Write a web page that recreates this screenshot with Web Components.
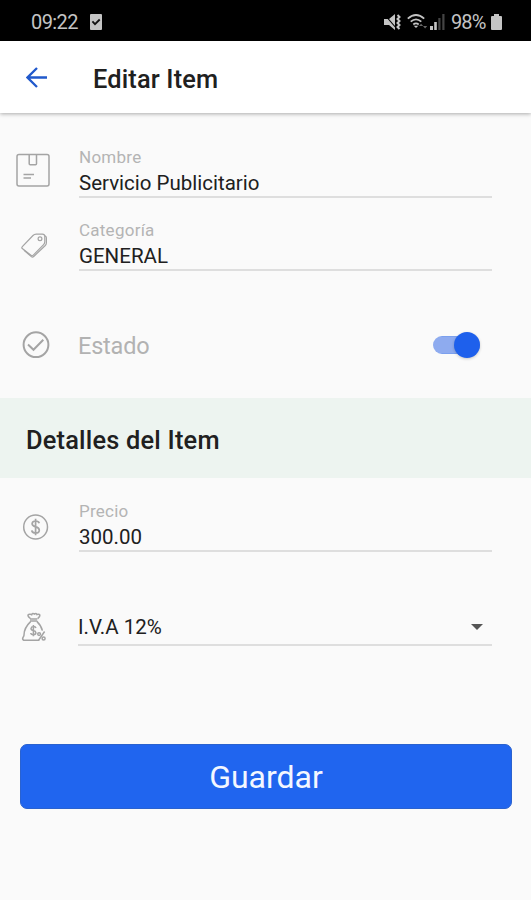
<!DOCTYPE html>
<html lang="es">
<head>
<meta charset="utf-8">
<title>Editar Item</title>
<style>
body { margin: 0; background: #fafafa; font-family: Roboto, "Liberation Sans", sans-serif; color: #202020; }
</style>
</head>
<body>
<edit-screen></edit-screen>
<script>
const define = (name, html) => {
  const template = document.createElement('template');
  template.innerHTML = html;
  customElements.define(name, class extends HTMLElement {
    constructor() {
      super();
      this.attachShadow({ mode: 'open' }).append(template.content.cloneNode(true));
    }
  });
};

define('status-bar', `
<style>
:host { display: flex; align-items: center; height: 41px; box-sizing: border-box; padding: 2px 29px 0 31px; background: #000; color: #c4c4c4; font-size: 20px; line-height: 24px; }
.time { width: 59px; letter-spacing: -.6px; }
.fill { flex: 1; }
.pct { width: 40px; letter-spacing: -.9px; }
svg { display: block; flex: none; }
.vol { margin-right: 6px; } .wifi { margin-right: 2px; } .sig { margin-right: 6px; }
</style>
<span class="time">09:22</span>
<svg width="12" height="16" viewBox="0 0 12 16"><rect width="12" height="16" rx="1" fill="#c4c4c4"/><path d="M2.4 7.4l2.6 2.8 4.7-4.7" fill="none" stroke="#111" stroke-width="1.8"/></svg>
<span class="fill"></span>
<svg class="vol" width="17" height="16" viewBox="0 0 17 16"><path d="M0 5h5l6-5v16L5 11H0z" fill="#c4c4c4"/><path d="M0 0l13 15" stroke="#000" stroke-width="1.1"/><path d="M13.5 1l2 2-2 2 2 2-2 2 2 2-2 2 2 2" fill="none" stroke="#c4c4c4" stroke-width="2"/></svg>
<svg class="wifi" width="21" height="16" viewBox="0 0 21 16"><g fill="none" stroke="#c4c4c4" stroke-width="1.8"><path d="M.8 4.6Q9 -2.7 17.2 4.6M3.7 7.7Q9 3 14.3 7.7M6.3 10.5Q9 8.3 11.7 10.5"/></g><path d="M6.7 11.7h4.6L9 14z" fill="#c4c4c4"/><path d="M12 12l2.1-2.3 2.1 2.3zm4 0l2.1 2.4 2.1-2.4z" fill="#666"/></svg>
<svg class="sig" width="15" height="16" viewBox="0 0 15 16"><path d="M0 12h3v4H0zM4.2 8h2.6v8H4.2z" fill="#c4c4c4"/><path d="M8.3 4h2.2v12H8.3zM12.3 0h2.2v16h-2.2z" fill="#444"/></svg>
<span class="pct">98%</span>
<svg width="11" height="16" viewBox="0 0 11 16"><path d="M3 0h5v2h2q1 0 1 1v12q0 1-1 1H1q-1 0-1-1V3q0-1 1-1h2z" fill="#c4c4c4"/></svg>
`);

define('app-bar', `
<style>
:host { display: flex; align-items: center; height: 72px; padding-left: 26px; background: #fff; box-shadow: 0 1px 4px rgba(0,0,0,.32); box-sizing: border-box; }
svg { display: block; margin-right: 46px; }
h1 { margin: 3px 0 0; font-size: 25.4px; font-weight: 500; line-height: 30px; letter-spacing: .15px; }
</style>
<svg width="21" height="21" viewBox="0 0 21 21"><path d="M21 10.5H2M11 1L1.5 10.5 11 20" fill="none" stroke="#2159cc" stroke-width="2.3"/></svg>
<h1><slot></slot></h1>
`);

define('form-row', `
<style>
:host { display: grid; grid-template-columns: 63px 414px; padding-left: 15px; align-items: start; }
::slotted(svg) { display: block; }
</style>
<slot name="icon"></slot><slot></slot>
`);

define('text-field', `
<style>
:host { display: block; box-sizing: border-box; height: 51px; border-bottom: 2px solid #dedede; margin-left: 1px; }
.label { display: block; font-size: 17px; line-height: 20px; color: #b4b4b4; letter-spacing: .25px; }
.value { display: block; font-size: 20.5px; line-height: 33px; }
</style>
<span class="label"><slot name="label"></slot></span><span class="value"><slot></slot></span>
`);

define('select-field', `
<style>
:host { display: flex; align-items: center; justify-content: space-between; box-sizing: border-box; height: 34px; border-bottom: 2px solid #dedede; padding-right: 9px; padding-bottom: 3px; font-size: 20.5px; line-height: 26px; }
span { padding-top: 1px; }
i { width: 0; border: 6px solid transparent; border-top-color: #555; border-bottom: 0; margin-top: 1px; }
</style>
<span><slot></slot></span><i></i>
`);

define('toggle-switch', `
<style>
:host { display: flex; align-items: center; justify-content: flex-end; box-sizing: border-box; width: 47px; height: 18px; border-radius: 9px; background: linear-gradient(#7ba0ee 0 1px, #8eabef 1px 17px, #7ba0ee 17px); }
i { flex: none; width: 26px; height: 26px; border-radius: 50%; background: #1e60ec; box-shadow: 0 1px 3px rgba(0,0,0,.2); }
</style><i></i>
`);

define('state-line', `
<style>
:host { display: flex; align-items: center; justify-content: space-between; height: 30px; padding-right: 12px; font-size: 23.5px; letter-spacing: -.2px; color: #b2b2b2; }
span { padding-top: 2px; }
</style>
<span><slot></slot></span><toggle-switch></toggle-switch>
`);

define('section-title', `
<style>
:host { display: flex; align-items: center; height: 80px; box-sizing: border-box; padding: 3px 0 0 26px; background: #edf4f0; }
h2 { margin: 0; font-size: 25.4px; font-weight: 500; line-height: 30px; letter-spacing: .2px; }
</style>
<h2><slot></slot></h2>
`);

define('save-button', `
<style>
:host { display: block; }
button { display: block; width: 100%; height: 65px; border: 1px solid #2a62cf; border-radius: 7px; padding: 0; background: #2065ef; color: #f3f7ff; font: 400 32px/40px Roboto, "Liberation Sans", sans-serif; }
</style>
<button type="button"><slot></slot></button>
`);

define('edit-screen', `
<style>
:host { display: flex; flex-direction: column; width: 531px; height: 900px; background: #fafafa; }
svg { fill: none; stroke: #a4a4a4; }
.name { margin-top: 34px; }
.cat { margin-top: 22px; }
.state { margin-top: 59px; }
section-title { margin-top: 38px; }
.price { margin-top: 23px; }
.tax { margin-top: 60px; }
save-button { margin: 98px 19px 0 20px; }
</style>
<status-bar></status-bar>
<app-bar>Editar Item</app-bar>
<form-row class="name">
  <svg slot="icon" width="36" height="40" viewBox="0 0 36 40" stroke-width="1.5"><rect x="2" y="7.5" width="32" height="31.5" rx="2"/><path d="M14.2 7.5v9.3q0 1 1 1h5.3q1 0 1-1V7.5M8.5 27.5h10.5M8.5 31h7.5"/></svg>
  <text-field><span slot="label">Nombre</span>Servicio Publicitario</text-field>
</form-row>
<form-row class="cat">
  <svg slot="icon" width="36" height="42" viewBox="0 0 36 42" stroke-width="1.2"><path d="M7.3 26.7L18 15.5q1.3-1.4 3.2-1.4h6.2q2.4 0 2.4 2.3v5.4q0 1.7-1.2 2.9L18.3 35.2q-1.2 1.2-2.4 0L7.3 28.6q-1-1 0-1.9z"/><path d="M9 30.3l7.3 6.3q1.2 1 2.4-.1l11.6-11q1.1-1.1 1.1-2.8v-4.9q0-1.2-1.6-2"/><circle cx="25" cy="18.7" r="1.9"/></svg>
  <text-field><span slot="label">Categoría</span>GENERAL</text-field>
</form-row>
<form-row class="state">
  <svg slot="icon" width="36" height="30" viewBox="0 0 36 30" stroke-width="2"><circle cx="21" cy="14.7" r="12.4"/><path d="M13 14.6l5.5 5.2 9.8-10"/></svg>
  <state-line>Estado</state-line>
</form-row>
<section-title>Detalles del Item</section-title>
<form-row class="price">
  <svg slot="icon" width="36" height="42" viewBox="0 0 36 42" stroke-width="1.5"><circle cx="20.6" cy="26" r="11.9"/><path stroke-width="1.7" d="M24.2 22.2q-.5-2.2-3.6-2.2t-3.5 2.6q0 2.4 3.5 3.3 3.7.8 3.7 3.3 0 2.8-3.7 2.8t-3.8-2.6M20.6 17.8v16.4"/></svg>
  <text-field><span slot="label">Precio</span>300.00</text-field>
</form-row>
<form-row class="tax">
  <svg slot="icon" width="36" height="34" viewBox="0 0 36 34" stroke-width="1.5"><path d="M15.4 6.5Q11.2 3 14.3 2.3q1.5-.4 2.4.4.8-2 2.8-.6 1.7-1.4 2.4.4 2.3-.8 3 .5.2 1.7-2.2 3.6M15 6.9h7.3M15 9.1h7.3M15.6 9.6C12 13 9 17.6 9 23q0 1-.7 1.9-1.4 2.2.2 3.3h15.8M22 9.6c2.2 2 4.5 5 5.4 9.1"/><path d="M21 16q-.5-1.4-2.6-1.4T16 16.5q0 1.6 2.4 2.1t2.5 2.2q0 1.9-2.5 1.9T15.8 21M18.4 13v11.3M29.6 19.5l-6 8.7"/><circle cx="24.1" cy="22.1" r="1.4"/><circle cx="28.6" cy="26.4" r="1.5"/></svg>
  <select-field>I.V.A 12%</select-field>
</form-row>
<save-button>Guardar</save-button>
`);
</script>
</body>
</html>
